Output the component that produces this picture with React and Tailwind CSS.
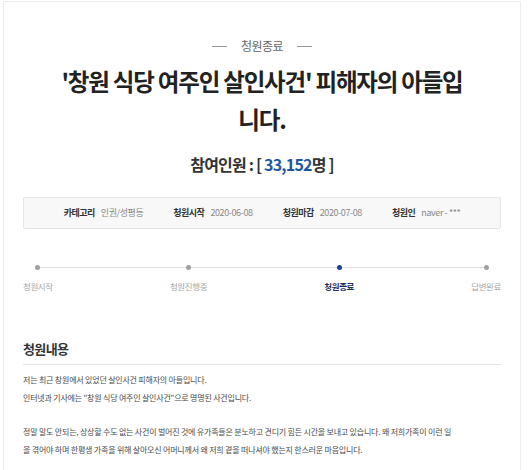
import React from "react";

const font = { fontFamily: '"Noto Sans CJK KR", "Noto Sans", sans-serif' };

function InfoItem({ label, value }) {
  return (
    <div className="flex items-center gap-[6px] whitespace-nowrap">
      <span className="text-[9px] font-bold text-[#333] tracking-[-0.5px]">{label}</span>
      <span className="text-[9px] text-[#888] tracking-[-0.4px]">{value}</span>
    </div>
  );
}

function Step({ label, active }) {
  return (
    <div className="relative z-10 flex flex-col items-center">
      <div className={"h-[5px] w-[5px] rounded-full " + (active ? "bg-[#1d3f94]" : "bg-[#a0a0a0]")} />
      <div
        className={
          "mt-[10px] text-[8.5px] leading-[12px] tracking-[-0.4px] whitespace-nowrap " +
          (active ? "font-bold text-[#1c2f5e]" : "text-[#a5a5a5]")
        }
      >
        {label}
      </div>
    </div>
  );
}

export default function App() {
  return (
    <div className="w-[530px] h-[470px] bg-white overflow-hidden pt-px" style={font}>
      <div className="ml-[3px] w-[518px] h-[480px] border border-[#ececec] bg-white px-[19px] pt-[36px]">
        <div className="flex items-center justify-center gap-[14px] text-[#666]">
          <div className="h-px w-[15px] bg-[#999]" />
          <span className="text-[12px] leading-[16px] tracking-[-0.6px]">청원종료</span>
          <div className="h-px w-[15px] bg-[#999]" />
        </div>

        <h1 className="mt-[8px] text-center text-[23.5px] leading-[38px] font-bold text-[#222] tracking-[-1.2px]">
          '창원 식당 여주인 살인사건' 피해자의 아들입
          <br />
          니다.
        </h1>

        <div className="mt-[14px] text-center text-[16px] leading-[24px] font-bold tracking-[-0.8px] text-[#333]">
          참여인원 : [ <span className="text-[#1f56a3]">33,152</span>명 ]
        </div>

        <div className="mt-[21px] h-[32px] flex items-center justify-center gap-[30px] bg-[#f8f8f8] border border-[#e6e6e6] rounded-[2px]">
          <InfoItem label="카테고리" value="인권/성평등" />
          <InfoItem label="청원시작" value="2020-06-08" />
          <InfoItem label="청원마감" value="2020-07-08" />
          <InfoItem label="청원인" value="naver - ***" />
        </div>

        <div className="relative mt-[36px] flex justify-between">
          <div className="absolute left-[16px] right-[16px] top-[2px] h-px bg-[#dddddd]" />
          <Step label="청원시작" />
          <Step label="청원진행중" />
          <Step label="청원종료" active />
          <Step label="답변완료" />
        </div>

        <div className="mt-[47px] border-b border-[#e2e2e2] pb-[5px]">
          <h2 className="text-[13px] leading-[20px] font-bold text-[#333] tracking-[-0.6px]">청원내용</h2>
        </div>

        <div className="mt-[6px] text-[8px] leading-[18px] text-[#4a4a4a] tracking-[-0.2px] whitespace-nowrap">
          <p>저는 최근 창원에서 있었던 살인사건 피해자의 아들입니다.</p>
          <p>인터넷과 기사에는 "창원 식당 여주인 살인사건"으로 명명된 사건입니다.</p>
          <p className="mt-[16px]">
            정말 말도 안되는, 상상할 수도 없는 사건이 벌어진 것에 유가족들은 분노하고 견디기 힘든 시간을 보내고 있습니다. 왜 저희가족이 이런 일
          </p>
          <p>을 겪어야 하며 한평생 가족을 위해 살아오신 어머니께서 왜 저희 곁을 떠나셔야 했는지 한스러운 마음입니다.</p>
        </div>
      </div>
    </div>
  );
}
